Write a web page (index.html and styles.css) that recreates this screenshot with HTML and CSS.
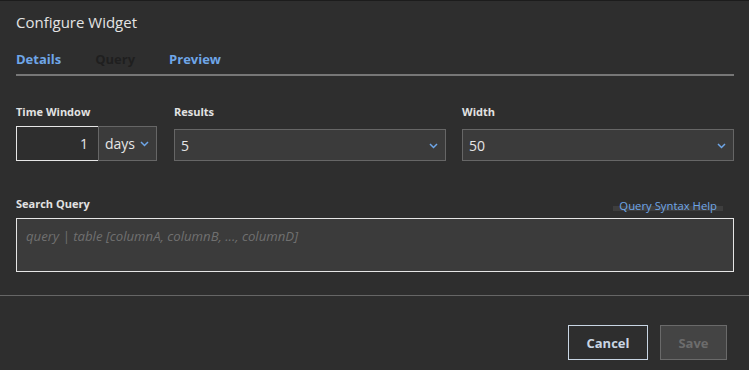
FILE: index.html
```html
<!DOCTYPE html>
<html>
<head lang="en">
    <meta charset="UTF-8">
    <title>Configure Widget</title>
    <link rel="stylesheet" href="styles.css">
</head>
<body>
<div class="dialog">
    <div class="dialog-head">
        <h1 class="title">Configure Widget</h1>
        <div class="tabs">
            <a href="javascript:;" class="tab">Details</a>
            <a href="javascript:;" class="tab tab-off">Query</a>
            <a href="javascript:;" class="tab">Preview</a>
        </div>
    </div>
    <div class="dialog-body">
        <div class="row">
            <div class="field field-time">
                <label class="label">Time Window</label>
                <div class="time-group">
                    <input class="time-input" type="text" value="1">
                    <div class="select select-small">
                        <span>days</span>
                        <svg class="chev" width="9" height="6" viewBox="0 0 9 6"><path d="M1 1l3.5 3.5L8 1" fill="none" stroke="#6ea6e8" stroke-width="1.5"/></svg>
                    </div>
                </div>
            </div>
            <div class="field field-wide">
                <label class="label">Results</label>
                <div class="select">
                    <span>5</span>
                    <svg class="chev" width="9" height="6" viewBox="0 0 9 6"><path d="M1 1l3.5 3.5L8 1" fill="none" stroke="#6ea6e8" stroke-width="1.5"/></svg>
                </div>
            </div>
            <div class="field field-wide">
                <label class="label">Width</label>
                <div class="select">
                    <span>50</span>
                    <svg class="chev" width="9" height="6" viewBox="0 0 9 6"><path d="M1 1l3.5 3.5L8 1" fill="none" stroke="#6ea6e8" stroke-width="1.5"/></svg>
                </div>
            </div>
        </div>
        <div class="query">
            <div class="query-head">
                <label class="label">Search Query</label>
                <a href="javascript:;" class="help">Query Syntax Help</a>
            </div>
            <textarea class="query-box" placeholder="query | table [columnA, columnB, ..., columnD]"></textarea>
        </div>
    </div>
    <div class="dialog-foot">
        <button class="btn btn-cancel">Cancel</button>
        <button class="btn btn-save" disabled>Save</button>
    </div>
</div>
</body>
</html>
```

FILE: styles.css
```css
* { margin: 0; padding: 0; box-sizing: border-box; text-decoration: none; }
html, body { height: 100%; }
body { background: #2e2e2e; font-family: "Open Sans", "Liberation Sans", sans-serif; color: #e2e2e2; }
.dialog { height: 100%; border-top: 1px solid #1c1c1c; display: flex; flex-direction: column; }
.dialog-head { padding: 11px 15px 0 16px; }
.title { font-size: 15px; font-weight: normal; line-height: 20px; color: #e4e4e4; }
.tabs { display: flex; gap: 34px; margin-top: 18px; padding-bottom: 6px; border-bottom: 2px solid #777; }
.tab { font-size: 13px; font-weight: bold; line-height: 18px; color: #6ea6e8; }
.tab-off { color: #1f1f1f; }
.dialog-body { padding: 28px 15px 23px 16px; border-bottom: 1px solid #666; }
.row { display: flex; gap: 16px; align-items: flex-start; }
.field { display: flex; flex-direction: column; }
.field-time { width: 142px; }
.field-wide { width: 272px; }
.label { font-size: 11px; font-weight: bold; line-height: 15px; color: #e2e2e2; margin-bottom: 7px; }
.time-group { display: flex; height: 35px; }
.time-input { width: 83px; height: 35px; background: #2e2e2e; border: 1px solid #e6e6e6; color: #e6e6e6;
    font-family: inherit; font-size: 14px; text-align: right; padding-right: 10px; outline: none; }
.select { display: flex; align-items: center; justify-content: space-between; height: 32px; padding: 0 7px 0 6px;
    background: #3b3b3b; border: 1px solid #666; font-size: 14px; color: #e6e6e6; }
.field-wide .select { margin-top: 3px; }
.select span { line-height: 20px; padding-top: 2px; }
.select-small { width: 59px; height: 35px; margin-left: -1px; padding: 0 7px 0 6px; }
.select-small span { padding-top: 0; }
.chev { margin-top: 1px; }
.query { margin-top: 35px; }
.query-head { display: flex; justify-content: space-between; align-items: flex-end; }
.query-head .label { margin-bottom: 7px; }
.help { font-size: 11.3px; line-height: 15px; color: #6ea6e8; padding: 0 6px; margin-right: 11px; margin-bottom: 5px;
    background: linear-gradient(to bottom, transparent 53%, #3e3e3e 53%, #3e3e3e 87%, transparent 87%); }
.query-box { display: block; width: 718px; height: 54px; background: #3b3b3b; border: 1px solid #e6e6e6; resize: none;
    font-family: inherit; font-size: 13.2px; color: #e6e6e6; padding: 8px 9px; outline: none; }
.query-box::placeholder { color: #707070; font-style: italic; }
.dialog-foot { display: flex; justify-content: flex-end; gap: 12px; padding: 29px 22px 0 0; }
.btn { height: 35px; font-family: inherit; font-size: 13px; font-weight: bold; background: #2e2e2e; }
.btn-cancel { width: 80px; border: 1px solid #c9d6e4; color: #c9d6e4; }
.btn-save { width: 67px; border: 1px solid #6a6a6a; background: #444; color: #6c6c6c; }
```
